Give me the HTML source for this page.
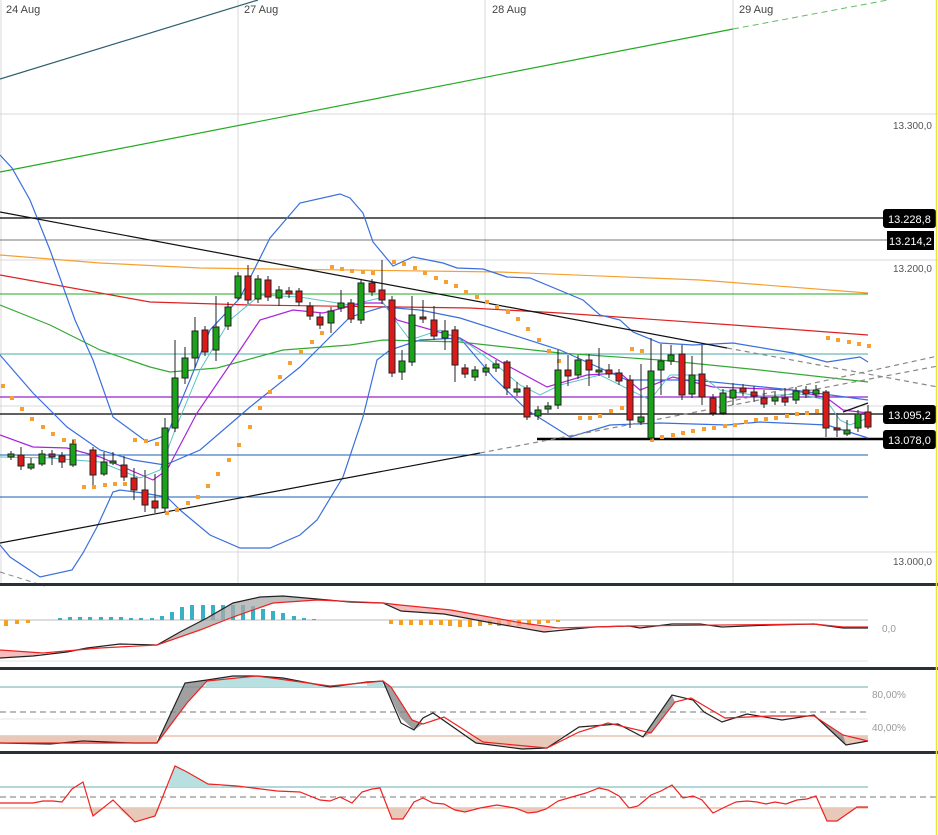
<!DOCTYPE html>
<html><head><meta charset="utf-8"><style>
html,body{margin:0;padding:0;background:#fff;}
svg{display:block;font-family:"Liberation Sans",sans-serif;}
.lbl{font-size:11px;fill:#444;}
.box{font-size:11px;fill:#fff;}
.ax{font-size:10px;fill:#999;}
</style></head><body>
<svg width="938" height="835" viewBox="0 0 938 835" xmlns="http://www.w3.org/2000/svg">
<rect width="938" height="835" fill="#fff"/>
<!-- grid -->
<g stroke="#d8d8d8" stroke-width="1">
<line x1="0" y1="114" x2="938" y2="114"/>
<line x1="0" y1="260" x2="938" y2="260"/>
<line x1="0" y1="406" x2="938" y2="406"/>
<line x1="0" y1="552" x2="938" y2="552"/>
<line x1="1" y1="0" x2="1" y2="584"/>
<line x1="238" y1="0" x2="238" y2="584"/>
<line x1="485" y1="0" x2="485" y2="584"/>
<line x1="733" y1="0" x2="733" y2="584"/>
</g>
<text class="lbl" x="6" y="13">24 Aug</text>
<text class="lbl" x="244" y="13">27 Aug</text>
<text class="lbl" x="492" y="13">28 Aug</text>
<text class="lbl" x="739" y="13">29 Aug</text>
<!-- trend lines -->
<line x1="0" y1="79" x2="258" y2="0" stroke="#2e5f6e" stroke-width="1.2"/>
<line x1="0" y1="172" x2="733" y2="29" stroke="#22aa22" stroke-width="1.2"/>
<line x1="733" y1="29" x2="888" y2="0" stroke="#66bb66" stroke-width="1" stroke-dasharray="6,4"/>
<!-- horizontal levels -->
<line x1="0" y1="218" x2="883" y2="218" stroke="#000" stroke-width="1.2"/>
<line x1="0" y1="240" x2="887" y2="240" stroke="#777" stroke-width="1"/>
<line x1="0" y1="294" x2="868" y2="294" stroke="#22aa22" stroke-width="1"/>
<line x1="0" y1="354" x2="868" y2="354" stroke="#44aaaa" stroke-width="1"/>
<line x1="0" y1="397" x2="868" y2="397" stroke="#9922cc" stroke-width="1.2"/>
<line x1="0" y1="414" x2="883" y2="414" stroke="#000" stroke-width="1.2"/>
<line x1="537" y1="439" x2="883" y2="439" stroke="#000" stroke-width="2.5"/>
<line x1="0" y1="455" x2="868" y2="455" stroke="#1a5fb4" stroke-width="1"/>
<line x1="0" y1="497" x2="868" y2="497" stroke="#1a5fb4" stroke-width="1"/>
<!-- MAs -->
<g fill="none" stroke-width="1.2">
<polyline stroke="#f5a030" points="0,255 100,263 200,268 500,272 700,280 868,293"/>
<polyline stroke="#dd2222" points="0,275 150,302 250,305 470,308 560,313 733,325 868,335"/>
<polyline stroke="#33aa33" points="0,305 50,325 100,350 150,367 170,372 217,368 283,350 350,345 383,340 460,342 560,353 660,360 760,370 868,382"/>
<polyline stroke="#aa22dd" points="0,435 33,447 67,448 100,457 153,480 167,470 197,413 240,350 260,320 293,310 323,313 363,303 383,303 397,320 460,338 510,367 547,387 587,375 620,373 640,390 673,377 693,382 713,387 793,390 827,398 843,410 868,413"/>
<polyline stroke="#3a6fdd" points="0,155 12,168 30,200 50,250 75,320 93,360 113,417 147,442 167,435 190,380 210,330 240,298 270,238 300,203 340,194 350,198 363,213 373,242 393,266 413,257 443,263 457,268 483,269 507,277 530,278 583,300 600,315 620,320 633,332 660,343 693,345 733,343 793,353 827,362 860,357 868,362"/>
<polyline stroke="#3a6fdd" points="0,355 33,393 67,427 100,450 133,460 165,465 200,450 250,407 300,367 350,317 383,307 420,310 460,318 560,350 627,380 693,380 793,390 868,400"/>
<polyline stroke="#3a6fdd" points="0,545 10,557 40,577 72,570 83,553 97,527 113,492 120,490 143,493 167,497 180,510 210,535 240,548 270,548 300,535 317,520 343,477 363,417 377,360 390,350 420,340 460,338 493,377 527,410 570,437 610,425 660,423 727,425 760,422 827,425 868,438"/>
<polyline stroke="#5bc4c4" stroke-width="1" points="0,457 50,458 100,462 140,478 160,470 175,430 200,370 230,320 260,295 300,297 350,305 380,298 395,320 410,340 440,330 470,345 500,368 520,385 540,395 560,385 600,375 630,390 650,400 670,375 700,375 720,390 760,396 800,394 826,400 840,420 850,425 868,418"/>
</g>
<!-- trend lines black -->
<line x1="0" y1="212" x2="727" y2="348" stroke="#111" stroke-width="1.2"/>
<line x1="727" y1="348" x2="938" y2="387" stroke="#888" stroke-width="1.2" stroke-dasharray="5,4"/>
<line x1="0" y1="543" x2="480" y2="453" stroke="#111" stroke-width="1.2"/>
<line x1="480" y1="453" x2="938" y2="366" stroke="#888" stroke-width="1.2" stroke-dasharray="5,4"/>
<line x1="727" y1="402" x2="938" y2="356" stroke="#888" stroke-width="1.2" stroke-dasharray="5,4"/>
<line x1="843" y1="412" x2="868" y2="403" stroke="#111" stroke-width="1.2"/>
<line x1="0" y1="572" x2="45" y2="586" stroke="#888" stroke-width="1" stroke-dasharray="5,4"/>
<!-- PSAR -->
<g fill="#f5a030">
<rect x="1" y="384" width="4" height="4"/><rect x="10" y="396" width="4" height="4"/><rect x="20" y="407" width="4" height="4"/><rect x="30" y="417" width="4" height="4"/><rect x="41" y="425" width="4" height="4"/><rect x="51" y="432" width="4" height="4"/><rect x="62" y="438" width="4" height="4"/><rect x="72" y="439" width="4" height="4"/>
<rect x="82" y="485" width="4" height="4"/><rect x="92" y="485" width="4" height="4"/><rect x="103" y="483" width="4" height="4"/><rect x="113" y="482" width="4" height="4"/><rect x="123" y="482" width="4" height="4"/>
<rect x="133" y="438" width="4" height="4"/><rect x="144" y="439" width="4" height="4"/><rect x="155" y="442" width="4" height="4"/>
<rect x="165" y="511" width="4" height="4"/><rect x="175" y="508" width="4" height="4"/><rect x="186" y="501" width="4" height="4"/><rect x="196" y="495" width="4" height="4"/><rect x="206" y="484" width="4" height="4"/><rect x="216" y="472" width="4" height="4"/><rect x="227" y="458" width="4" height="4"/><rect x="237" y="443" width="4" height="4"/><rect x="248" y="425" width="4" height="4"/><rect x="258" y="406" width="4" height="4"/><rect x="268" y="390" width="4" height="4"/><rect x="278" y="375" width="4" height="4"/><rect x="288" y="361" width="4" height="4"/><rect x="299" y="350" width="4" height="4"/><rect x="310" y="340" width="4" height="4"/><rect x="320" y="331" width="4" height="4"/>
<rect x="330" y="265" width="4" height="4"/><rect x="340" y="267" width="4" height="4"/><rect x="350" y="269" width="4" height="4"/><rect x="361" y="270" width="4" height="4"/><rect x="371" y="271" width="4" height="4"/><rect x="392" y="260" width="4" height="4"/><rect x="402" y="262" width="4" height="4"/><rect x="413" y="266" width="4" height="4"/><rect x="423" y="271" width="4" height="4"/><rect x="434" y="276" width="4" height="4"/><rect x="444" y="280" width="4" height="4"/><rect x="454" y="284" width="4" height="4"/><rect x="464" y="290" width="4" height="4"/><rect x="475" y="295" width="4" height="4"/><rect x="485" y="300" width="4" height="4"/><rect x="495" y="305" width="4" height="4"/><rect x="506" y="310" width="4" height="4"/><rect x="516" y="317" width="4" height="4"/><rect x="526" y="327" width="4" height="4"/><rect x="537" y="338" width="4" height="4"/><rect x="547" y="349" width="4" height="4"/><rect x="557" y="359" width="4" height="4"/>
<rect x="578" y="416" width="4" height="4"/><rect x="588" y="416" width="4" height="4"/><rect x="598" y="414" width="4" height="4"/><rect x="609" y="409" width="4" height="4"/><rect x="620" y="406" width="4" height="4"/><rect x="630" y="347" width="4" height="4"/><rect x="640" y="349" width="4" height="4"/>
<rect x="650" y="438" width="4" height="4"/><rect x="660" y="435" width="4" height="4"/><rect x="671" y="433" width="4" height="4"/><rect x="681" y="431" width="4" height="4"/><rect x="691" y="429" width="4" height="4"/><rect x="702" y="427" width="4" height="4"/><rect x="712" y="426" width="4" height="4"/><rect x="723" y="424" width="4" height="4"/><rect x="733" y="423" width="4" height="4"/><rect x="744" y="420" width="4" height="4"/><rect x="754" y="418" width="4" height="4"/><rect x="764" y="417" width="4" height="4"/><rect x="774" y="416" width="4" height="4"/><rect x="785" y="414" width="4" height="4"/><rect x="795" y="412" width="4" height="4"/><rect x="805" y="411" width="4" height="4"/><rect x="815" y="409" width="4" height="4"/>
<rect x="826" y="336" width="4" height="4"/><rect x="836" y="338" width="4" height="4"/><rect x="847" y="340" width="4" height="4"/><rect x="857" y="342" width="4" height="4"/><rect x="867" y="344" width="4" height="4"/>
</g>
<!-- candles -->
<g stroke="#222" stroke-width="1">
<line x1="11" y1="451" x2="11" y2="460"/><rect x="8" y="454" width="6" height="3" fill="#1aa31a"/>
<line x1="21" y1="447" x2="21" y2="470"/><rect x="18" y="455" width="6" height="11" fill="#dd1a1a"/>
<line x1="31" y1="458" x2="31" y2="470"/><rect x="28" y="464" width="6" height="4" fill="#1aa31a"/>
<line x1="42" y1="450" x2="42" y2="466"/><rect x="39" y="454" width="6" height="10" fill="#1aa31a"/>
<line x1="52" y1="450" x2="52" y2="465"/><rect x="49" y="454" width="6" height="3" fill="#aa2266"/>
<line x1="62" y1="452" x2="62" y2="468"/><rect x="59" y="456" width="6" height="6" fill="#dd1a1a"/>
<line x1="73" y1="440" x2="73" y2="467"/><rect x="70" y="444" width="6" height="21" fill="#1aa31a"/>
<line x1="93" y1="447" x2="93" y2="485"/><rect x="90" y="450" width="6" height="25" fill="#dd1a1a"/>
<line x1="104" y1="452" x2="104" y2="476"/><rect x="101" y="462" width="6" height="12" fill="#1aa31a"/>
<line x1="113" y1="452" x2="113" y2="465"/><rect x="110" y="461" width="6" height="2" fill="#1aa31a"/>
<line x1="124" y1="456" x2="124" y2="481"/><rect x="121" y="465" width="6" height="12" fill="#dd1a1a"/>
<line x1="134" y1="468" x2="134" y2="500"/><rect x="131" y="478" width="6" height="12" fill="#dd1a1a"/>
<line x1="145" y1="470" x2="145" y2="512"/><rect x="142" y="490" width="6" height="15" fill="#dd1a1a"/>
<line x1="155" y1="474" x2="155" y2="513"/><rect x="152" y="501" width="6" height="7" fill="#dd1a1a"/>
<line x1="165" y1="418" x2="165" y2="512"/><rect x="162" y="428" width="6" height="80" fill="#1aa31a"/>
<line x1="175" y1="340" x2="175" y2="432"/><rect x="172" y="378" width="6" height="50" fill="#1aa31a"/>
<line x1="185" y1="347" x2="185" y2="384"/><rect x="182" y="358" width="6" height="20" fill="#1aa31a"/>
<line x1="195" y1="317" x2="195" y2="368"/><rect x="192" y="331" width="6" height="27" fill="#1aa31a"/>
<line x1="205" y1="326" x2="205" y2="356"/><rect x="202" y="330" width="6" height="22" fill="#dd1a1a"/>
<line x1="216" y1="296" x2="216" y2="361"/><rect x="213" y="327" width="6" height="23" fill="#1aa31a"/>
<line x1="228" y1="302" x2="228" y2="330"/><rect x="225" y="307" width="6" height="19" fill="#1aa31a"/>
<line x1="238" y1="272" x2="238" y2="300"/><rect x="235" y="276" width="6" height="22" fill="#1aa31a"/>
<line x1="248" y1="265" x2="248" y2="304"/><rect x="245" y="276" width="6" height="24" fill="#dd1a1a"/>
<line x1="258" y1="275" x2="258" y2="303"/><rect x="255" y="279" width="6" height="20" fill="#1aa31a"/>
<line x1="268" y1="276" x2="268" y2="301"/><rect x="265" y="280" width="6" height="17" fill="#dd1a1a"/>
<line x1="279" y1="286" x2="279" y2="306"/><rect x="276" y="290" width="6" height="8" fill="#1aa31a"/>
<line x1="289" y1="287" x2="289" y2="298"/><rect x="286" y="291" width="6" height="3" fill="#dd1a1a"/>
<line x1="299" y1="288" x2="299" y2="306"/><rect x="296" y="291" width="6" height="11" fill="#dd1a1a"/>
<line x1="310" y1="302" x2="310" y2="320"/><rect x="307" y="306" width="6" height="10" fill="#dd1a1a"/>
<line x1="320" y1="313" x2="320" y2="329"/><rect x="317" y="317" width="6" height="8" fill="#dd1a1a"/>
<line x1="331" y1="307" x2="331" y2="333"/><rect x="328" y="311" width="6" height="12" fill="#1aa31a"/>
<line x1="341" y1="290" x2="341" y2="312"/><rect x="338" y="303" width="6" height="5" fill="#1aa31a"/>
<line x1="351" y1="299" x2="351" y2="323"/><rect x="348" y="303" width="6" height="16" fill="#dd1a1a"/>
<line x1="361" y1="279" x2="361" y2="324"/><rect x="358" y="283" width="6" height="37" fill="#1aa31a"/>
<line x1="372" y1="279" x2="372" y2="296"/><rect x="369" y="283" width="6" height="9" fill="#dd1a1a"/>
<line x1="382" y1="260" x2="382" y2="304"/><rect x="379" y="290" width="6" height="10" fill="#dd1a1a"/>
<line x1="392" y1="296" x2="392" y2="377"/><rect x="389" y="300" width="6" height="73" fill="#dd1a1a"/>
<line x1="402" y1="350" x2="402" y2="380"/><rect x="399" y="361" width="6" height="11" fill="#1aa31a"/>
<line x1="412" y1="296" x2="412" y2="366"/><rect x="409" y="315" width="6" height="47" fill="#1aa31a"/>
<line x1="423" y1="300" x2="423" y2="323"/><rect x="420" y="317" width="6" height="2" fill="#dd1a1a"/>
<line x1="434" y1="306" x2="434" y2="340"/><rect x="431" y="320" width="6" height="16" fill="#dd1a1a"/>
<line x1="445" y1="320" x2="445" y2="350"/><rect x="442" y="331" width="6" height="7" fill="#1aa31a"/>
<line x1="455" y1="326" x2="455" y2="382"/><rect x="452" y="330" width="6" height="35" fill="#dd1a1a"/>
<line x1="465" y1="364" x2="465" y2="378"/><rect x="462" y="368" width="6" height="6" fill="#dd1a1a"/>
<line x1="475" y1="366" x2="475" y2="381"/><rect x="472" y="370" width="6" height="7" fill="#1aa31a"/>
<line x1="486" y1="364" x2="486" y2="376"/><rect x="483" y="368" width="6" height="4" fill="#1aa31a"/>
<line x1="496" y1="360" x2="496" y2="372"/><rect x="493" y="364" width="6" height="4" fill="#1aa31a"/>
<line x1="507" y1="360" x2="507" y2="395"/><rect x="504" y="362" width="6" height="26" fill="#dd1a1a"/>
<line x1="517" y1="382" x2="517" y2="396"/><rect x="514" y="389" width="6" height="3" fill="#1aa31a"/>
<line x1="527" y1="385" x2="527" y2="420"/><rect x="524" y="388" width="6" height="29" fill="#dd1a1a"/>
<line x1="538" y1="406" x2="538" y2="420"/><rect x="535" y="410" width="6" height="6" fill="#1aa31a"/>
<line x1="548" y1="402" x2="548" y2="413"/><rect x="545" y="406" width="6" height="3" fill="#1aa31a"/>
<line x1="558" y1="350" x2="558" y2="409"/><rect x="555" y="370" width="6" height="35" fill="#1aa31a"/>
<line x1="568" y1="355" x2="568" y2="386"/><rect x="565" y="370" width="6" height="6" fill="#dd1a1a"/>
<line x1="578" y1="355" x2="578" y2="379"/><rect x="575" y="360" width="6" height="15" fill="#1aa31a"/>
<line x1="589" y1="354" x2="589" y2="386"/><rect x="586" y="360" width="6" height="10" fill="#dd1a1a"/>
<line x1="599" y1="348" x2="599" y2="376"/><rect x="596" y="370" width="6" height="2" fill="#1aa31a"/>
<line x1="609" y1="364" x2="609" y2="378"/><rect x="606" y="370" width="6" height="4" fill="#dd1a1a"/>
<line x1="619" y1="369" x2="619" y2="385"/><rect x="616" y="373" width="6" height="8" fill="#dd1a1a"/>
<line x1="630" y1="375" x2="630" y2="428"/><rect x="627" y="380" width="6" height="40" fill="#dd1a1a"/>
<line x1="641" y1="364" x2="641" y2="425"/><rect x="638" y="417" width="6" height="5" fill="#1aa31a"/>
<line x1="651" y1="338" x2="651" y2="440"/><rect x="648" y="371" width="6" height="67" fill="#1aa31a"/>
<line x1="661" y1="344" x2="661" y2="395"/><rect x="658" y="361" width="6" height="9" fill="#1aa31a"/>
<line x1="671" y1="345" x2="671" y2="365"/><rect x="668" y="355" width="6" height="6" fill="#1aa31a"/>
<line x1="682" y1="345" x2="682" y2="400"/><rect x="679" y="354" width="6" height="41" fill="#dd1a1a"/>
<line x1="692" y1="356" x2="692" y2="398"/><rect x="689" y="375" width="6" height="19" fill="#1aa31a"/>
<line x1="702" y1="345" x2="702" y2="405"/><rect x="699" y="374" width="6" height="23" fill="#dd1a1a"/>
<line x1="713" y1="394" x2="713" y2="416"/><rect x="710" y="398" width="6" height="15" fill="#dd1a1a"/>
<line x1="723" y1="389" x2="723" y2="415"/><rect x="720" y="393" width="6" height="20" fill="#1aa31a"/>
<line x1="733" y1="383" x2="733" y2="405"/><rect x="730" y="390" width="6" height="8" fill="#1aa31a"/>
<line x1="743" y1="384" x2="743" y2="396"/><rect x="740" y="388" width="6" height="4" fill="#dd1a1a"/>
<line x1="754" y1="386" x2="754" y2="402"/><rect x="751" y="392" width="6" height="4" fill="#dd1a1a"/>
<line x1="764" y1="390" x2="764" y2="408"/><rect x="761" y="398" width="6" height="6" fill="#dd1a1a"/>
<line x1="775" y1="392" x2="775" y2="405"/><rect x="772" y="397" width="6" height="4" fill="#1aa31a"/>
<line x1="785" y1="388" x2="785" y2="406"/><rect x="782" y="398" width="6" height="4" fill="#dd1a1a"/>
<line x1="796" y1="387" x2="796" y2="404"/><rect x="793" y="391" width="6" height="9" fill="#1aa31a"/>
<line x1="806" y1="386" x2="806" y2="398"/><rect x="803" y="390" width="6" height="4" fill="#dd1a1a"/>
<line x1="816" y1="385" x2="816" y2="398"/><rect x="813" y="390" width="6" height="4" fill="#1aa31a"/>
<line x1="826" y1="390" x2="826" y2="437"/><rect x="823" y="392" width="6" height="36" fill="#dd1a1a"/>
<line x1="837" y1="413" x2="837" y2="437"/><rect x="834" y="428" width="6" height="2" fill="#dd1a1a"/>
<line x1="847" y1="420" x2="847" y2="436"/><rect x="844" y="430" width="6" height="4" fill="#1aa31a"/>
<line x1="858" y1="410" x2="858" y2="432"/><rect x="855" y="414" width="6" height="14" fill="#1aa31a"/>
<line x1="868" y1="405" x2="868" y2="429"/><rect x="865" y="412" width="6" height="15" fill="#dd1a1a"/>
</g>
<!-- price labels -->
<text class="ax" x="893" y="129" style="fill:#555">13.300,0</text>
<text class="ax" x="893" y="272" style="fill:#555">13.200,0</text>
<text class="ax" x="893" y="565" style="fill:#555">13.000,0</text>
<rect x="883" y="209" width="53" height="19" rx="3" fill="#000"/><text class="box" x="888" y="223">13.228,8</text>
<rect x="887" y="231" width="47" height="19" fill="#000"/><text class="box" x="889" y="245">13.214,2</text>
<rect x="883" y="405" width="53" height="19" rx="3" fill="#000"/><text class="box" x="888" y="419">13.095,2</text>
<rect x="883" y="430" width="53" height="19" rx="3" fill="#000"/><text class="box" x="888" y="444">13.078,0</text>
<!-- separators -->
<rect x="0" y="583" width="938" height="3" fill="#2a3036"/>
<rect x="0" y="667" width="938" height="3" fill="#2a3036"/>
<rect x="0" y="751" width="938" height="3" fill="#2a3036"/>
<!-- MACD panel -->
<line x1="0" y1="620" x2="868" y2="620" stroke="#bbb"/>
<line x1="0" y1="661" x2="868" y2="661" stroke="#e4e4e4"/>
<text class="ax" x="882" y="632">0,0</text>
<g fill="#f5a020">
<rect x="4" y="620" width="4" height="6"/><rect x="15" y="620" width="4" height="4"/><rect x="26" y="620" width="4" height="3"/>
<rect x="389" y="620" width="4" height="4"/><rect x="399" y="620" width="4" height="5"/><rect x="409" y="620" width="4" height="5"/><rect x="419" y="620" width="4" height="5"/><rect x="429" y="620" width="4" height="5"/><rect x="439" y="620" width="4" height="5"/><rect x="448" y="620" width="4" height="6"/><rect x="458" y="620" width="4" height="7"/><rect x="468" y="620" width="4" height="7"/><rect x="478" y="620" width="4" height="6"/><rect x="488" y="620" width="4" height="5"/><rect x="497" y="620" width="4" height="6"/><rect x="507" y="620" width="4" height="6"/><rect x="517" y="620" width="4" height="6"/><rect x="527" y="620" width="4" height="5"/><rect x="537" y="620" width="4" height="4"/><rect x="546" y="620" width="4" height="3"/><rect x="556" y="620" width="4" height="2"/>
</g>
<g fill="#3ab0c4">
<rect x="58" y="618" width="4" height="2"/><rect x="68" y="617" width="4" height="3"/><rect x="78" y="617" width="4" height="3"/><rect x="88" y="617" width="4" height="3"/><rect x="99" y="617" width="4" height="3"/><rect x="109" y="617" width="4" height="3"/><rect x="119" y="617" width="4" height="3"/><rect x="129" y="618" width="4" height="2"/><rect x="139" y="618" width="4" height="2"/><rect x="150" y="618" width="4" height="2"/>
<rect x="160" y="616" width="4" height="4"/><rect x="170" y="612" width="4" height="8"/><rect x="180" y="607" width="4" height="13"/><rect x="190" y="605" width="4" height="15"/><rect x="201" y="605" width="4" height="15"/><rect x="211" y="605" width="4" height="15"/><rect x="221" y="605" width="4" height="15"/><rect x="231" y="605" width="4" height="15"/><rect x="241" y="605" width="4" height="15"/><rect x="251" y="606" width="4" height="14"/><rect x="261" y="609" width="4" height="11"/><rect x="271" y="611" width="4" height="9"/><rect x="281" y="613" width="4" height="7"/><rect x="292" y="616" width="4" height="4"/><rect x="302" y="618" width="4" height="2"/><rect x="312" y="619" width="4" height="1"/>
</g>
<polygon fill="#aaa" opacity="0.75" points="157,645 180,632 207,618 233,603 260,597 283,596 317,599 317,600 273,603 233,617 200,630"/>
<polygon fill="#f4a0a0" opacity="0.7" points="0,658 33,656 43,653 0,650"/>
<polygon fill="#f4a0a0" opacity="0.7" points="383,603 401,611 444,614 487,622 544,632 558,628 522,623 451,610 400,605"/>
<polyline fill="none" stroke="#222" stroke-width="1.2" points="0,658 33,656 67,652 87,648 120,644 157,645 180,632 207,618 233,603 260,597 283,596 317,599 350,602 383,603 401,611 444,614 487,622 544,632 594,627 629,626 640,628 672,624 700,624 722,627 771,625 814,624 843,628 868,628"/>
<polyline fill="none" stroke="#ee2222" stroke-width="1.2" points="0,650 43,653 100,648 157,645 200,630 233,617 273,603 317,600 383,603 400,605 451,610 522,623 558,628 629,626 814,624 843,627 868,627"/>
<!-- Stoch panel -->
<line x1="0" y1="687" x2="868" y2="687" stroke="#6aacb0"/>
<line x1="0" y1="712" x2="868" y2="712" stroke="#777" stroke-dasharray="6,4"/>
<line x1="0" y1="719" x2="868" y2="719" stroke="#e4e4e4"/>
<line x1="0" y1="736" x2="868" y2="736" stroke="#e0a080"/>
<text class="ax" x="872" y="698">80,00%</text>
<text class="ax" x="872" y="731">40,00%</text>
<polygon fill="#e8c8b8" points="0,736 157,736 157,743 133,743 83,741 50,744 0,743"/>
<polygon fill="#b8e0e0" points="205,687 207,681 233,676 257,676 283,678 330,687 367,687 367,682 383,681 383,687"/>
<polygon fill="#e8c8b8" points="468,736 476,743 522,749 547,748 563,736"/>
<polygon fill="#e8c8b8" points="835,736 846,745 868,741 868,736"/>
<polygon fill="#888" opacity="0.8" points="157,743 185,683 207,680 207,681 187,703"/>
<polygon fill="#888" opacity="0.8" points="383,681 400,717 414,730 423,724 412,720 391,687"/>
<polygon fill="#888" opacity="0.8" points="643,737 672,695 675,702 651,733"/>
<polygon fill="#888" opacity="0.8" points="814,716 846,745 843,735"/>
<polyline fill="none" stroke="#222" stroke-width="1.2" points="0,743 50,744 83,741 133,743 157,743 185,683 207,680 233,676 257,676 283,678 330,687 367,682 383,681 401,723 414,730 423,718 433,713 476,743 522,749 547,748 579,727 618,724 643,737 672,695 693,700 704,712 722,722 747,714 782,720 814,715 846,745 868,741"/>
<polyline fill="none" stroke="#ee2222" stroke-width="1.2" points="0,743 157,743 187,703 207,681 257,676 330,686 383,681 391,687 412,720 423,724 444,717 483,742 547,748 579,732 608,723 651,733 675,702 691,698 725,718 771,716 814,716 843,735 868,741"/>
<!-- third panel -->
<line x1="0" y1="787" x2="868" y2="787" stroke="#6aacb0"/>
<line x1="0" y1="797" x2="938" y2="797" stroke="#777" stroke-dasharray="6,4"/>
<line x1="0" y1="808" x2="868" y2="808" stroke="#e0a080"/>
<polygon fill="#b8e0e0" points="168,787 175,766 187,772 208,784 222,787"/>
<polygon fill="#e8c8b8" points="88,808 93,816 103,808"/>
<polygon fill="#e8c8b8" points="118,808 135,822 155,816 160,808"/>
<polygon fill="#e8c8b8" points="389,808 392,819 403,819 408,808"/>
<polygon fill="#e8c8b8" points="448,808 455,810 465,812 475,808"/>
<polygon fill="#e8c8b8" points="512,808 528,813 537,812 546,809 548,808"/>
<polygon fill="#e8c8b8" points="820,808 827,821 837,821 857,808"/>
<polyline fill="none" stroke="#ee2222" stroke-width="1.2" points="0,803 33,803 43,801 53,801 62,802 72,789 83,782 93,816 113,800 135,822 155,816 175,766 187,772 208,784 237,786 277,791 300,792 320,800 330,801 340,797 352,803 362,792 372,789 380,788 392,819 403,819 414,802 423,798 433,803 444,804 455,810 465,812 480,808 497,805 515,808 528,813 537,812 546,809 558,801 572,797 586,793 599,788 608,790 619,796 629,808 638,806 651,795 661,791 672,785 683,798 693,796 702,800 713,813 725,807 736,802 747,801 757,802 766,804 775,802 786,804 797,800 807,799 816,796 827,821 837,821 857,807 868,807"/>
<line x1="936.5" y1="0" x2="936.5" y2="835" stroke="#f0e040" stroke-width="1.5"/>
</svg>
</body></html>
